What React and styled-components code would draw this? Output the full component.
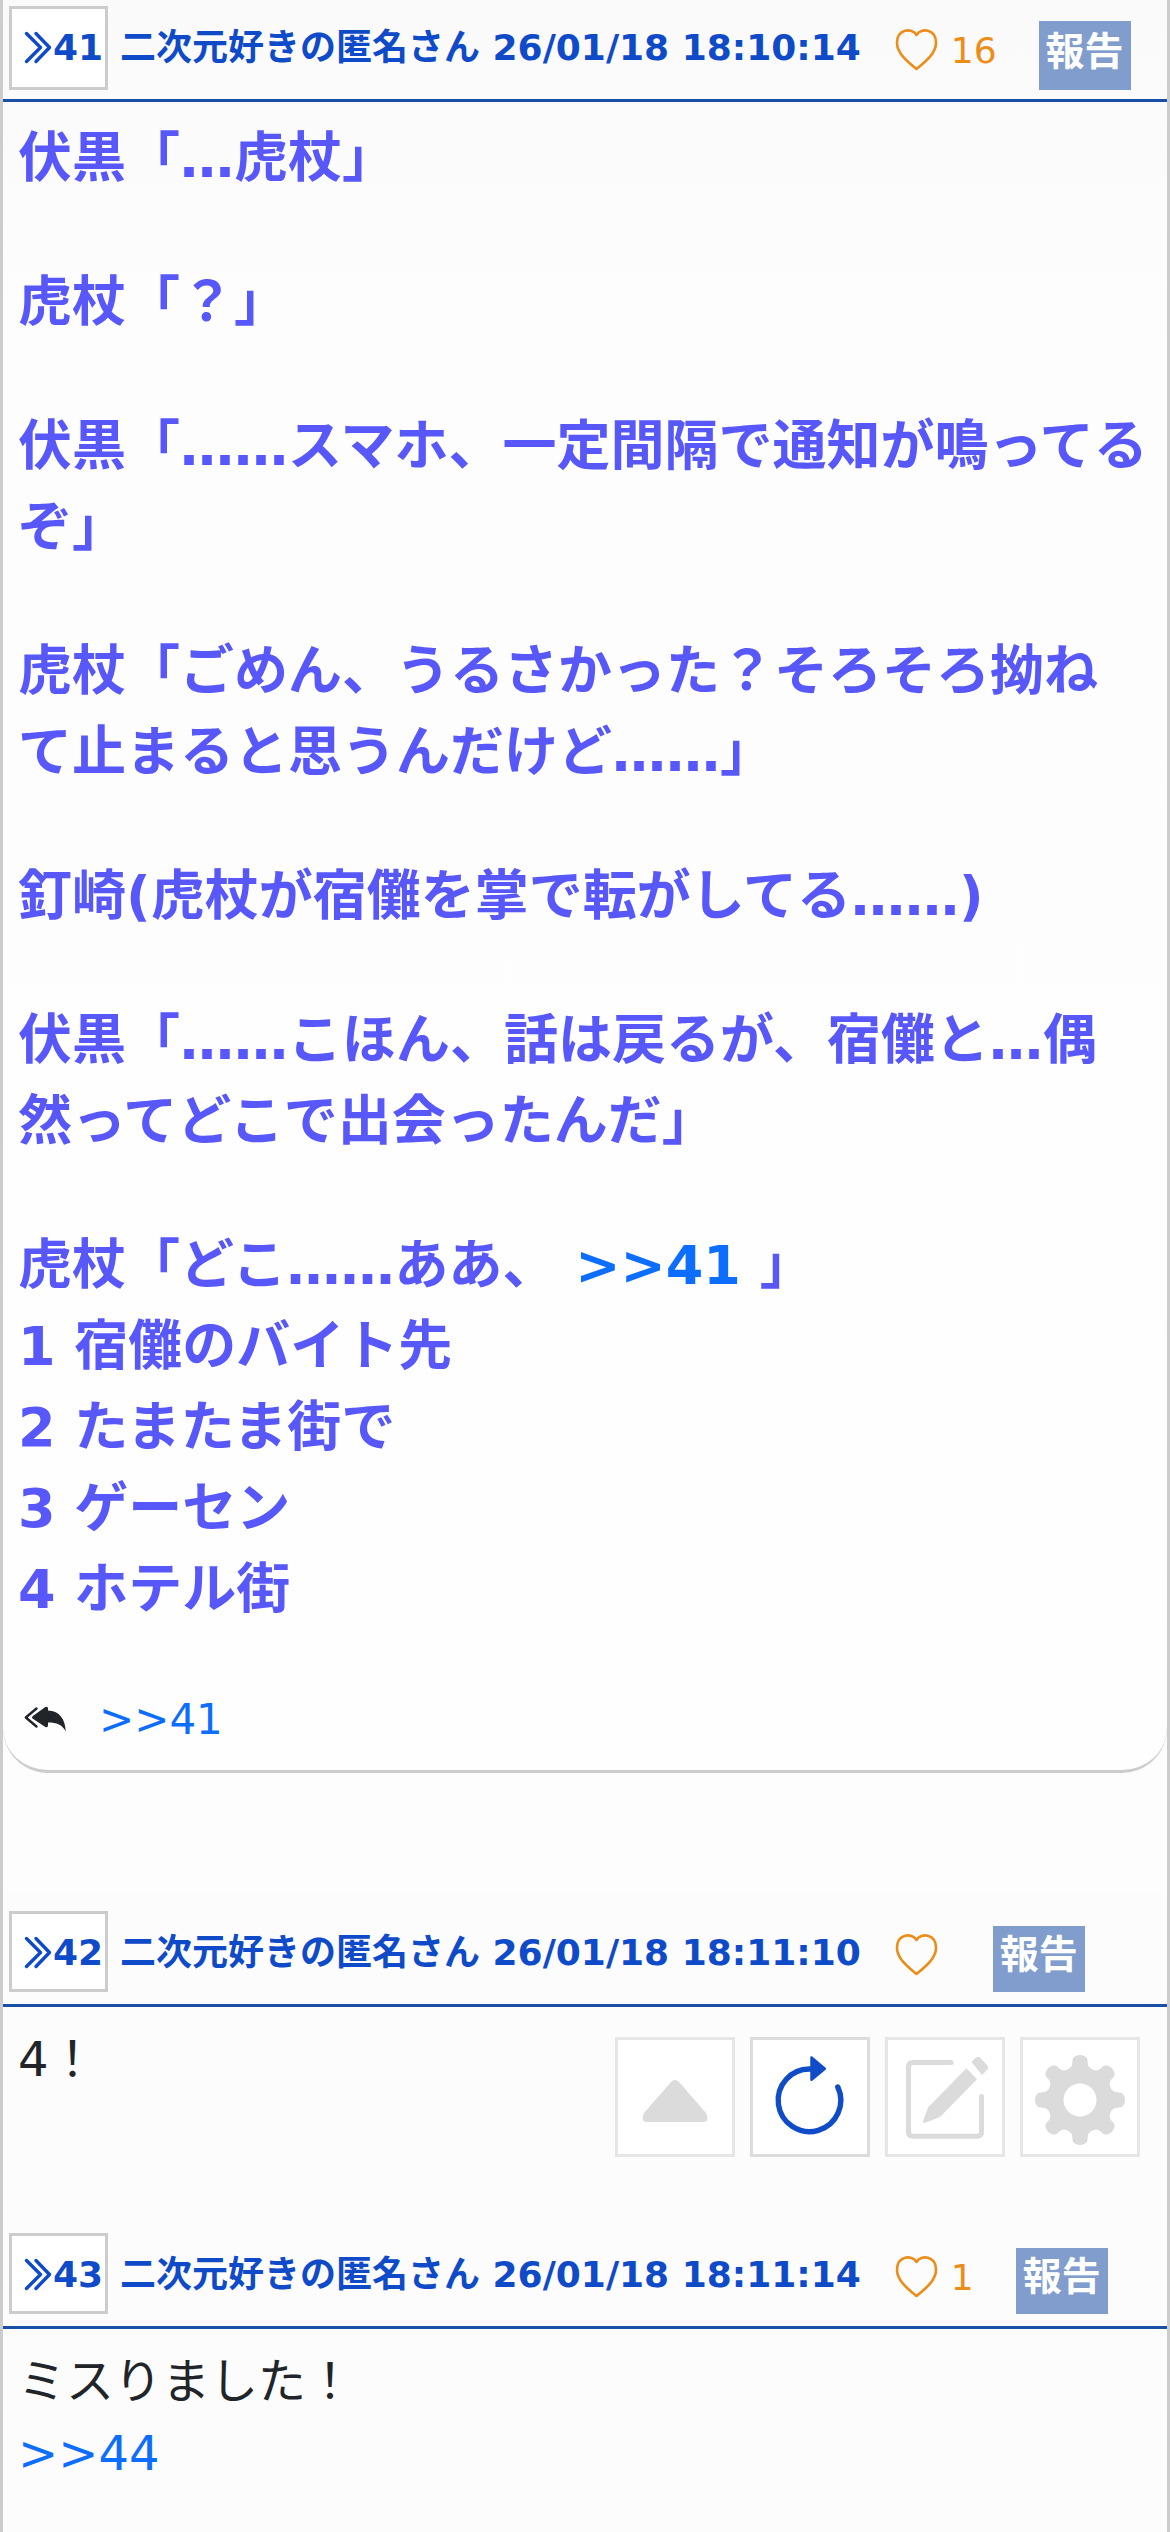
import React from "react";
import styled, { createGlobalStyle } from "styled-components";

const GlobalStyle = createGlobalStyle`
  *, *::before, *::after { box-sizing: border-box; }
  body {
    margin: 0;
    background: #fdfdfd;
    color: #212529;
    font-family: "DejaVu Sans", "Noto Sans CJK JP", sans-serif;
    font-size: 48px;
    line-height: 72px;
  }
`;

const Thread = styled.main`
  display: flex;
  flex-direction: column;
  min-height: 100vh;
  border: solid #ccc;
  border-width: 0 3px;
`;

const Post = styled.article`
  background: ${(p) => (p.$rounded ? "linear-gradient(#fafafa, #fdfdfd 20%, #fefefe)" : "#fcfcfc")};
  padding-bottom: ${(p) => (p.$rounded ? 0 : 120)}px;
  border-bottom: ${(p) => (p.$rounded ? "3px solid #ccc" : "0")};
  border-radius: ${(p) => (p.$rounded ? "0 0 45px 45px" : "0")};
  margin-bottom: ${(p) => (p.$rounded ? 120 : 0)}px;
`;

const PostHeader = styled.header`
  display: flex;
  align-items: flex-start;
  padding: ${(p) => (p.$first ? "6px 6px 9px" : "18px 6px 12px")};
  border-bottom: 3px solid #1a4fa8;
  color: #0f4bc8;
  font-size: 36px;
  font-weight: 700;
  line-height: 54px;
  white-space: nowrap;
`;

const NumberLink = styled.a`
  display: flex;
  width: 99px;
  height: ${(p) => (p.$first ? 84 : 81)}px;
  padding: 12px 0 0 12px;
  border: 3px solid #ccc;
  background: #fff;
  color: inherit;
  text-decoration: none;

  svg {
    flex: none;
    width: 29px;
    height: 54px;
  }
`;

const Author = styled.span`
  margin: 15px 33px 0 12px;
`;

const LikeButton = styled.button`
  display: flex;
  gap: 12px;
  margin: 18px 42px 0 0;
  padding: 0;
  border: 0;
  background: none;
  color: #ec8d1a;
  font: 400 36px/54px "DejaVu Sans", "Noto Sans CJK JP", sans-serif;

  svg {
    width: 45px;
    height: 54px;
  }
`;

const ReportButton = styled.button`
  margin: 15px 0 0;
  height: ${(p) => (p.$first ? 69 : 66)}px;
  padding: 0 7px 9px;
  border: 0;
  background: #809dcd;
  color: #fff;
  font: 700 39px/57px "DejaVu Sans", "Noto Sans CJK JP", sans-serif;
`;

const Body = styled.div`
  padding: 16px 15px 0;
`;

const Story = styled.div`
  display: flex;
  flex-direction: column;
  gap: 63px;
  color: #5757fa;
  font-size: 54px;
  font-weight: 700;
  line-height: 81px;
`;

const Paragraph = styled.p`
  margin: 0;
`;

const Anchor = styled.a`
  color: #0d6efd;
  text-decoration: none;
`;

const Replies = styled.footer`
  display: flex;
  align-items: center;
  gap: 33px;
  padding: 58px 21px 19px;
  font-size: 42px;
  line-height: 63px;

  svg {
    width: 42px;
    height: 27px;
  }
`;

const Toolbar = styled.nav`
  position: fixed;
  right: 30px;
  bottom: 375px;
  display: flex;
  gap: 15px;
`;

const ToolButton = styled.button`
  width: 120px;
  height: 120px;
  padding: 0;
  border: 3px solid ${(p) => (p.$active ? "#dcdcdc" : "#e6e6e6")};
  background: #fff;
  color: ${(p) => (p.$active ? "#104cc8" : "#dbdbdb")};

  svg {
    display: block;
    width: 114px;
    height: 114px;
  }
`;

const gearPath =
  Array.from({ length: 180 }, (_, i) => {
    const angle = (i * Math.PI) / 90;
    const spread = angle + 0.045 * Math.sin(16 * angle);
    const radius = 39 + 6 * Math.cos(8 * angle);
    const x = (60 + radius * Math.cos(spread)).toFixed(2);
    const y = (63 + radius * Math.sin(spread)).toFixed(2);
    return `${i ? "L" : "M"}${x} ${y}`;
  }).join("") + "ZM76.500 63a16.500 16.500 0 1 0-33 0a16.500 16.500 0 1 0 33 0Z";

function Chevrons() {
  return (
    <svg viewBox="0 0 29 54" fill="none" stroke="currentColor" strokeWidth="3.400" strokeLinecap="round" strokeLinejoin="round" aria-hidden="true">
      <path d="M2.500 12.500L16.500 26.500L2.500 40.500M12 12.500L25.500 26.500L12 40.500" />
    </svg>
  );
}

function Heart() {
  return (
    <svg viewBox="0 2 45 54" fill="none" stroke="currentColor" strokeWidth="2.600" strokeLinejoin="round" aria-hidden="true">
      <path d="M22.500 13C18 5.500 3 6.500 3 21C3 31 13 39.500 22.500 47C32 39.500 42 31 42 21C42 6.500 27 5.500 22.500 13Z" />
    </svg>
  );
}

function ReplyAll() {
  return (
    <svg viewBox="0 0 42 27" aria-hidden="true">
      <path d="M12.500 2.500L1.800 11.500L12.500 20.500" fill="none" stroke="currentColor" strokeWidth="2.400" strokeLinecap="round" strokeLinejoin="round" />
      <path d="M8.500 10.300L21 1.200Q24 0 24 2.500V4.500C35 5 41 12 41.800 25.500C38 18.500 33 16.500 24 16.500V19Q24 22.500 21 20.700L8.500 12.600Q7.500 11.500 8.500 10.300Z" fill="currentColor" />
    </svg>
  );
}

function PostHead({ number, time, likes, first }) {
  return (
    <PostHeader $first={first}>
      <NumberLink href={`#res${number}`} $first={first}>
        <Chevrons />
        {number}
      </NumberLink>
      <Author>二次元好きの匿名さん {time}</Author>
      <LikeButton type="button" aria-label="いいね">
        <Heart />
        <span>{likes}</span>
      </LikeButton>
      <ReportButton type="button" $first={first}>報告</ReportButton>
    </PostHeader>
  );
}

export default function App() {
  return (
    <>
      <GlobalStyle />
      <Thread>
        <Post $rounded id="res41">
          <PostHead first number={41} time="26/01/18 18:10:14" likes={16} />
          <Body>
            <Story>
              <Paragraph>伏黒「…虎杖」</Paragraph>
              <Paragraph>虎杖「？」</Paragraph>
              <Paragraph>伏黒「……スマホ、一定間隔で通知が鳴ってるぞ」</Paragraph>
              <Paragraph>虎杖「ごめん、うるさかった？そろそろ拗ね<br />て止まると思うんだけど……」</Paragraph>
              <Paragraph>釘崎(虎杖が宿儺を掌で転がしてる……)</Paragraph>
              <Paragraph>伏黒「……こほん、話は戻るが、宿儺と…偶<br />然ってどこで出会ったんだ」</Paragraph>
              <Paragraph>
                虎杖「どこ……ああ、 <Anchor href="#res41">&gt;&gt;41</Anchor> 」
                <br />1 宿儺のバイト先
                <br />2 たまたま街で
                <br />3 ゲーセン
                <br />4 ホテル街
              </Paragraph>
            </Story>
          </Body>
          <Replies>
            <ReplyAll />
            <Anchor href="#res41">&gt;&gt;41</Anchor>
          </Replies>
        </Post>

        <Post id="res42">
          <PostHead number={42} time="26/01/18 18:11:10" />
          <Body>
            <Paragraph>4！</Paragraph>
          </Body>
        </Post>

        <Post id="res43">
          <PostHead number={43} time="26/01/18 18:11:14" likes={1} />
          <Body>
            <Paragraph>
              ミスりました！
              <br />
              <Anchor href="#res44">&gt;&gt;44</Anchor>
            </Paragraph>
          </Body>
        </Post>
      </Thread>

      <Toolbar aria-label="スレッド操作">
        <ToolButton type="button" aria-label="上へ">
          <svg viewBox="3 3 114 114" fill="currentColor">
            <path d="M56 45Q60 41 64 45L91 76Q95 85 88 85H32Q25 85 29 76Z" />
          </svg>
        </ToolButton>
        <ToolButton type="button" aria-label="更新" $active>
          <svg viewBox="3 3 114 114" fill="none" stroke="currentColor" strokeWidth="5.400" strokeLinecap="round">
            <path d="M60 32A31.300 31.300 0 1 0 87.800 50" />
            <path d="M61.500 20.500L74.800 31.700L61.500 42.800Z" fill="currentColor" strokeWidth="2.500" strokeLinejoin="round" />
          </svg>
        </ToolButton>
        <ToolButton type="button" aria-label="書き込む">
          <svg viewBox="3 3 114 114" fill="currentColor">
            <path d="M66 25.500H28Q23.500 25.500 23.500 30V95Q23.500 99.300 28 99.300H92Q96.500 99.300 96.500 95V59.500" fill="none" stroke="currentColor" strokeWidth="5" strokeLinecap="round" />
            <path d="M81.400 31.300L92 42.300L55 80L39.500 86Q37.500 86 38 84L43.300 70.300Z" />
            <path d="M86.500 25L91 20.500Q93 19 95 20.500L102 28Q104 30.500 102.500 32.500L97 38Z" />
          </svg>
        </ToolButton>
        <ToolButton type="button" aria-label="設定">
          <svg viewBox="3 3 114 114" fill="currentColor" fillRule="evenodd">
            <path d={gearPath} />
          </svg>
        </ToolButton>
      </Toolbar>
    </>
  );
}
